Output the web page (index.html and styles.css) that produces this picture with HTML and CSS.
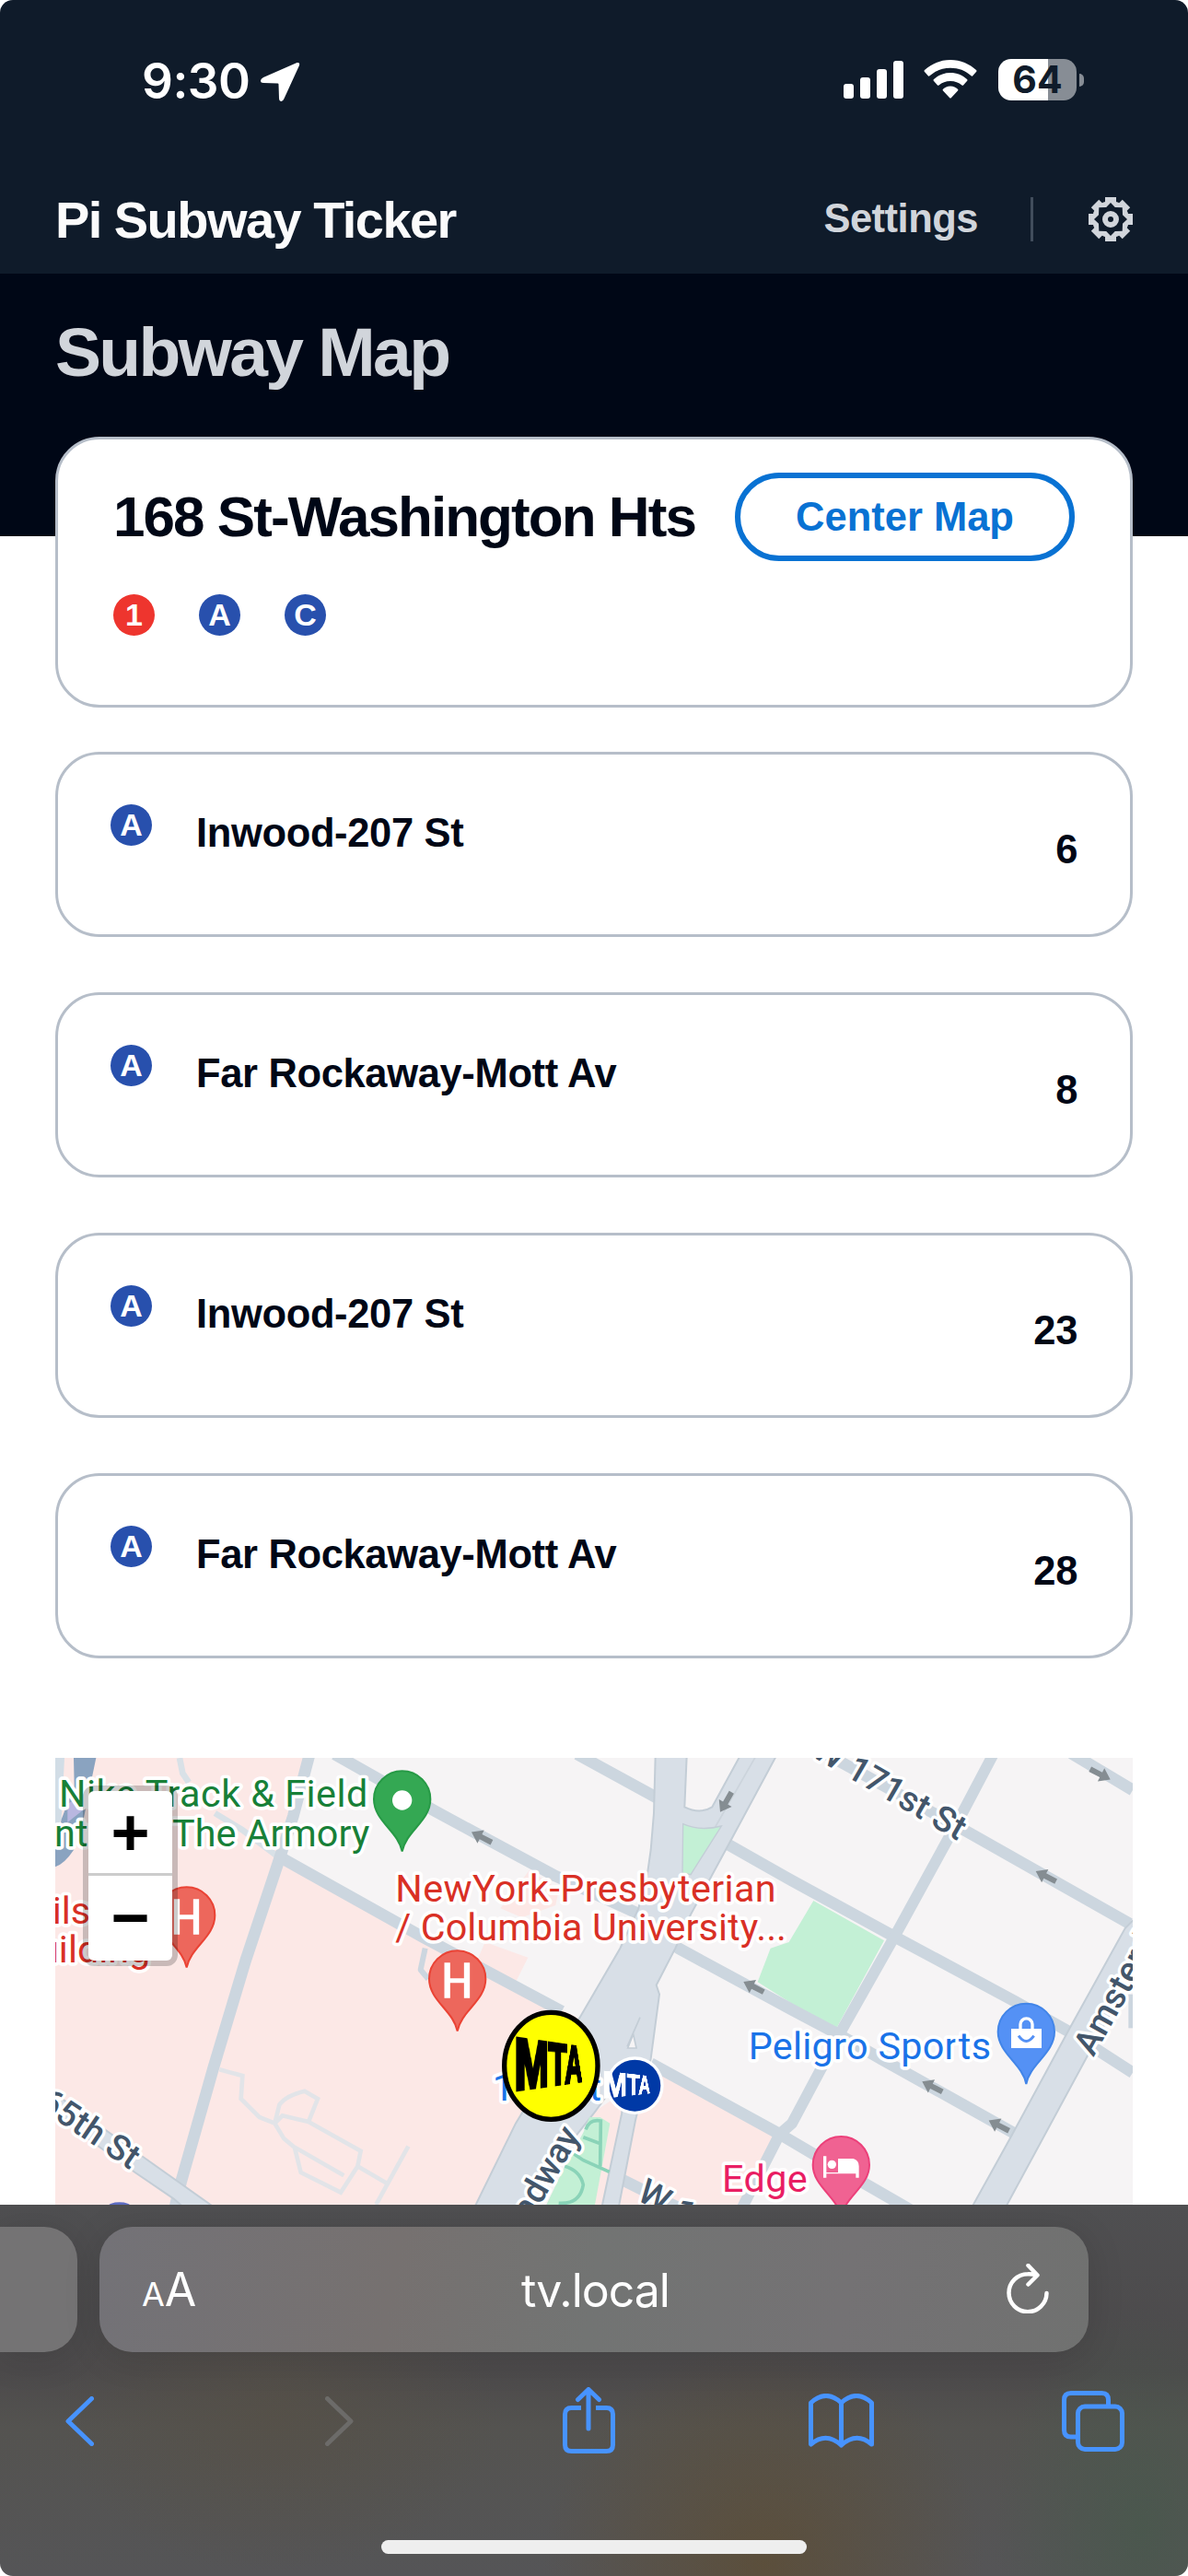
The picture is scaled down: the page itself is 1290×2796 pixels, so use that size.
FILE: index.html
```
<!DOCTYPE html>
<html lang="en">
<head>
<meta charset="utf-8">
<title>Pi Subway Ticker</title>
<link rel="stylesheet" href="styles.css">
</head>
<body>
<div class="screen">
  <header class="header">
    <div class="status">
      <div class="clock">
        <span class="time">9:30</span>
        <svg class="location" width="44" height="44" viewBox="0 0 44 44"><path d="M40.500 1 Q44 .5 43 4 L26.500 40 Q25 43.500 23 43 Q21 42.500 21 40 L20.500 24.500 Q20.500 23.500 19.500 23.500 L4 23 Q1 23 1 20.500 Q1 18.500 4 17 Z" fill="#fff"/></svg>
      </div>
      <div class="indicators">
        <svg width="65" height="41" viewBox="0 0 65 41" fill="#fff"><rect y="25" width="11" height="16" rx="3"/><rect x="18" y="18" width="11" height="23" rx="3"/><rect x="36" y="9" width="11" height="32" rx="3"/><rect x="54" width="11" height="41" rx="3"/></svg>
        <svg class="wifi" width="58" height="42" viewBox="0 0 58 42" fill="#fff"><path d="M29 0 C40 0 50 4.500 57 11 Q58 12 57 13 L53 17.500 Q52.500 18 51.500 17.300 C45 11.500 38 8.800 29 8.800 C20 8.800 13 11.500 6.500 17.300 Q5.500 18 5 17.500 L1 13 Q0 12 1 11 C8 4.500 18 0 29 0Z"/><path d="M29 14 C36 14 42 16.500 47 21 Q48 22 47 23 L43 27.500 Q42.300 28.200 41.500 27.500 C38 24.500 34 23 29 23 C24 23 20 24.500 16.500 27.500 Q15.700 28.200 15 27.500 L11 23 Q10 22 11 21 C16 16.500 22 14 29 14Z"/><path d="M29 28.500 C32.500 28.500 35 30 37 31.700 Q38 32.600 37 33.500 L30 41 Q29 42 28 41 L21 33.500 Q20 32.600 21 31.700 C23 30 25.500 28.500 29 28.500Z"/></svg>
        <div class="battery"><div class="cell">64</div><div class="nub"></div></div>
      </div>
    </div>
    <nav class="nav">
      <div class="brand">Pi Subway Ticker</div>
      <div class="links">
        <span class="settings">Settings</span>
        <span class="divider"></span>
        <svg width="48" height="48" viewBox="-24 -24 48 48">
          <g fill="#d1d5db">
            <circle r="20"/>
            <rect x="-6" y="-24" width="12" height="48"/>
            <rect x="-6" y="-24" width="12" height="48" transform="rotate(45)"/>
            <rect x="-6" y="-24" width="12" height="48" transform="rotate(90)"/>
            <rect x="-6" y="-24" width="12" height="48" transform="rotate(135)"/>
          </g>
          <path d="M0-18L4.800-13L12.700-12.700L13-4.800L18 0L13 4.800L12.700 12.700L4.800 13L0 18L-4.800 13L-12.700 12.700L-13 4.800L-18 0L-13-4.800L-12.700-12.700L-4.800-13Z" fill="#0f1b2a"/>
          <circle r="6" fill="none" stroke="#d1d5db" stroke-width="6"/>
        </svg>
      </div>
    </nav>
  </header>
  <main class="content">
    <section class="hero"><h1>Subway Map</h1></section>
    <section class="station">
      <div class="station-head"><h2>168 St-Washington Hts</h2><button class="center-btn">Center Map</button></div>
      <div class="lines"><span class="bullet red">1</span><span class="bullet">A</span><span class="bullet">C</span></div>
    </section>
    <section class="arrivals">
      <div class="arrival"><span class="bullet">A</span><span class="dest">Inwood-207 St</span><span class="mins">6</span></div>
      <div class="arrival"><span class="bullet">A</span><span class="dest">Far Rockaway-Mott Av</span><span class="mins">8</span></div>
      <div class="arrival"><span class="bullet">A</span><span class="dest">Inwood-207 St</span><span class="mins">23</span></div>
      <div class="arrival"><span class="bullet">A</span><span class="dest">Far Rockaway-Mott Av</span><span class="mins">28</span></div>
    </section>
    <section class="map">
      <svg class="tiles" width="1170" height="485" viewBox="0 0 3510 1455">
        <defs>
          <path id="pin" d="M0 0C-12-66-92-100-92-170A92 92 0 1 1 92-170C92-100 12-66 0 0Z"/>
          <path id="arrow" d="M-36 0L-2-24V-9H38V9H-2V24Z" fill="#858d92"/>
        </defs>
        <rect width="3510" height="1455" fill="#f6f4f5"/>
        <g fill="#fce8e6">
          <path d="M0 0H830L735 320L1200 590L1730 860L1370 1455H0Z"/>
          <path d="M1760 1150L1950 1020L2345 1235L2230 1455H1600Z"/>
          <path d="M1450 490L1545 365L1640 430L1630 480L1520 520ZM1400 600L1540 650L1500 730L1370 670Z"/>
        </g>
        <path d="M0 0H30L20 200L0 240Z" fill="#d2dde6"/>
        <path d="M60 0H133L110 110L90 210L60 300Q30 345 0 355V300L20 200L62 90Z" fill="#8aa3c0"/>
        <path d="M40 150L90 120V170L40 210Z" fill="#b9b7e0"/>
        <g fill="none" stroke="#e2e4e8" stroke-width="14">
          <path d="M405 0L415 50L435 80M520 180L610 235L730 325" stroke="#d9e1e7" stroke-width="20"/>
          <path d="M535 1015L610 1035L605 1110L665 1170L715 1190L730 1130Q750 1100 812 1085L855 1110L825 1185L740 1165L715 1190L745 1240L775 1265L940 1360M825 1185L995 1280L985 1330L930 1415L800 1350L780 1270M985 1330L1080 1385M1150 1265L1045 1455"/>
        </g>
        <path d="M2470 465L2700 595L2545 880L2400 800L2288 730L2330 620L2390 600Z" fill="#c3f0d5"/>
        <g fill="none" stroke="#ccd6df" stroke-width="38" stroke-linejoin="round">
          <path d="M735 325L1200 585L1650 825"/>
          <path d="M1205 620L1190 690L1215 720" stroke-width="18"/>
          <path d="M910-12L1240 175L1630 385L1950 530L2030 620L2400 820L2560 905L2690 980L3120 1220"/>
          <path d="M1700-12L1960 130M2180 275L2400 400L2730 580L3130 795L3300 890L3510 1025"/>
          <path d="M2480-30L2970 240L3500 540M3310-15L3510 105"/>
          <path d="M3060-20L2960 170L2735 580L2560 890L2400 1190L2360 1225L2235 1470" stroke-width="36"/>
          <path d="M1940 995L2360 1225L2470 1290L2800 1480M1820 1360L2100 1500"/>
          <path d="M828-10L775 190L725 345L620 660L515 1010L410 1380L388 1470"/>
          <path d="M3508 770V880" stroke-width="24"/>
        </g>
        <g fill="#d8dfe7" stroke="#c3cdd6" stroke-width="6">
          <path d="M-20 1080L290 1302L520 1465H420L385 1435L260 1350L-20 1150Z"/>
          <path d="M1955-5L1950 180L1940 300L1930 370L1900 490L1840 620L1712 840L1500 1190L1365 1465H1510L1760 1150L1870 1000L1860 1040L1845 1160L1780 1465H1835L1890 1180L1940 980L1968 770L1958 740L2020 620L2070 510L2200 270L2348-5H2230L2140 160Q2100 185 2050 160L2057-5Z"/>
          <path d="M3515 525L3485 555L3305 880L3110 1240L2985 1465H3095L3360 975L3515 690Z"/>
        </g>
        <path d="M2282-5L2150 225" stroke="#ccd4dc" stroke-width="5"/>
        <path d="M2045 215Q2100 240 2170 222L2070 380L2043 375Z" fill="#c3f0d5" stroke="#c3cdd6" stroke-width="4"/>
        <path d="M1905 845L1863 940M1883 900L1865 945H1893Z" fill="#f6f4f5" stroke="#c3cdd6" stroke-width="5"/>
        <path d="M1740 1170H1775L1807 1190L1758 1455H1600L1660 1330L1720 1220Z" fill="#c3f0d5"/>
        <path d="M1728 1210Q1740 1175 1777 1182L1775 1330M1720 1235L1780 1258M1690 1290L1720 1310L1805 1348M1660 1330Q1710 1345 1720 1390Q1710 1455 1640 1450" fill="none" stroke="#8ad3b8" stroke-width="11"/>
        <ellipse cx="209" cy="1462" rx="38" ry="15" fill="#5c6bc0"/>
        <use href="#arrow" transform="translate(1388 258) rotate(27)"/>
        <use href="#arrow" transform="translate(2274 745) rotate(27)"/>
        <use href="#arrow" transform="translate(3226 385) rotate(27)"/>
        <use href="#arrow" transform="translate(2856 1070) rotate(27)"/>
        <use href="#arrow" transform="translate(3073 1197) rotate(27)"/>
        <use href="#arrow" transform="translate(3405 54) rotate(207)"/>
        <use href="#arrow" transform="translate(2184 145) rotate(-60)"/>
        <g class="place green">
          <text x="12" y="160" textLength="1006">Nike Track &amp; Field</text>
          <text x="1024" y="287" text-anchor="end">Center at The Armory</text>
        </g>
        <g class="place crimson">
          <text x="1108" y="467" textLength="1240">NewYork-Presbyterian</text>
          <text x="1108" y="594" textLength="1274">/ Columbia University...</text>
          <text x="-118" y="540">Milstein</text>
          <text x="310" y="665" text-anchor="end">Building</text>
        </g>
        <text class="place blue" x="2258" y="980" textLength="790">Peligro Sports</text>
        <text class="place blue" x="1424" y="1115" textLength="355">168 St</text>
        <text class="place pink" x="2172" y="1412" textLength="278">Edge</text>
        <g class="street">
          <text transform="translate(2940 270) rotate(30)" text-anchor="end">W 171st St</text>
          <text transform="translate(244 1342) rotate(34)" text-anchor="end">W 165th St</text>
          <text transform="translate(1712 1228) rotate(-60)" text-anchor="end">Broadway</text>
          <text transform="translate(3382 976) rotate(-61)">Amsterdam Ave</text>
          <text transform="translate(1890 1436) rotate(29)">W 169th St</text>
        </g>
        <g stroke-width="6">
          <use href="#pin" x="1130" y="305" fill="#34a853" stroke="#279a46"/><circle cx="1130" cy="138" r="32" fill="#fff"/>
          <use href="#pin" x="428" y="683" fill="#ed675c" stroke="#ea4335"/>
          <use href="#pin" x="1310" y="890" fill="#ed675c" stroke="#ea4335"/>
          <use href="#pin" x="3163" y="1062" fill="#5491f5" stroke="#4285e8"/>
          <use href="#pin" x="2560" y="1495" fill="#f06292" stroke="#ec407a"/>
        </g>
        <path d="M396 460V575M459 460V575M1277 667V782M1341 667V782" stroke="#fff" stroke-width="19"/>
        <path d="M396 518H459M1277 725H1341" stroke="#fff" stroke-width="15"/>
        <path d="M3114 882H3213V945H3114Z" fill="#fff"/>
        <path d="M3144 885V868A19 19 0 0 1 3183 868V885" fill="none" stroke="#fff" stroke-width="10"/>
        <path d="M3138 905Q3163 940 3188 905" fill="none" stroke="#5491f5" stroke-width="9"/>
        <path d="M2502 1297H2512V1350H2550V1305H2600Q2618 1310 2618 1330V1367H2608V1354H2512V1367H2502Z" fill="#fff"/><circle cx="2530" cy="1324" r="14" fill="#fff"/>
        <circle cx="1888" cy="1067" r="94" fill="#fff"/><circle cx="1888" cy="1067" r="84" fill="#0039a6"/>
        <ellipse cx="1615" cy="1003" rx="152" ry="174" fill="#ff0" stroke="#000" stroke-width="16"/>
      </svg>
      <span class="mta mta-big">MTA</span>
      <span class="mta mta-small">MTA</span>
      <div class="zoom"><span>+</span><span>−</span></div>
    </section>
  </main>
  <footer class="toolbar">
    <div class="tabs">
      <div class="tab-prev"></div>
      <div class="address">
        <span class="aa"><small>A</small>A</span>
        <span class="url">tv.local</span>
        <svg width="46" height="54" viewBox="0 0 46 54" fill="none" stroke="#fff" stroke-width="4.500" stroke-linecap="round" stroke-linejoin="round"><path d="M43.500 32A20.500 20.500 0 1 1 23 11.200Q28 11 33 12.500M23.500 2L33.500 12.500L23.500 22.500"/></svg>
      </div>
    </div>
    <div class="actions">
      <svg width="31" height="54" viewBox="0 0 31 54"><path d="M28.500 2.500L3 27L28.500 51.500"/></svg>
      <svg class="off" width="31" height="54" viewBox="0 0 31 54"><path d="M2.500 2.500L28 27L2.500 51.500"/></svg>
      <svg class="share" width="57" height="73" viewBox="0 0 57 73"><path d="M20 22.500H9.500Q2.500 22.500 2.500 29.500V62.500Q2.500 69.500 9.500 69.500H47.500Q54.500 69.500 54.500 62.500V29.500Q54.500 22.500 47.500 22.500H36" stroke-linecap="butt"/><path d="M28 45V2.500M16.500 13.500L28 2.500L39.500 13.500"/></svg>
      <svg class="book" width="71" height="59" viewBox="0 0 71 59"><path d="M35.500 56Q19 41 2.500 55V10Q19-5 35.500 10Q52-5 68.500 10V55Q52 41 35.500 56V10"/></svg>
      <svg class="pages" width="68" height="66" viewBox="0 0 68 66"><path d="M15.500 50H10Q2.500 50 2.500 42.500V10Q2.500 2.500 10 2.500H43.500Q50.500 2.500 50.500 10V15" stroke-linecap="butt"/><rect x="17.500" y="17" width="48" height="46.500" rx="7.500"/></svg>
    </div>
    <div class="home"></div>
  </footer>
</div>
</body>
</html>
```
FILE: styles.css
```
* { box-sizing: border-box; }
body { margin: 0; background: #fff; font-family: "Liberation Sans", Arial, sans-serif; color: #000716; }
h1, h2 { margin: 0; font-weight: 700; }
svg { display: block; flex: none; }

.screen { width: 1290px; height: 2796px; display: flex; flex-direction: column; overflow: hidden; border-radius: 14px; background: #fff; }

.header { height: 297px; flex: none; background: #0f1b2a; }
.status { height: 178px; padding: 64px 113px 0 154px; display: flex; justify-content: space-between; align-items: flex-start; }
.clock { display: flex; align-items: center; gap: 11px; height: 49px; }
.time { font: 600 53px/49px Inter, sans-serif; color: #fff; letter-spacing: -.5px; }
.indicators { display: flex; align-items: flex-start; padding-top: 0; }
.indicators > svg { margin-top: 2px; }
.indicators > .wifi { margin: 1px 23px 0 22px; }
.battery { display: flex; align-items: center; gap: 3px; }
.cell { width: 85px; height: 45px; border-radius: 14px; background: linear-gradient(90deg, #fff 54px, #878d95 54px); font: 700 41px/45px Inter, sans-serif; color: #0f1b2a; text-align: center; }
.nub { width: 5px; height: 14px; border-radius: 0 5px 5px 0; background: #878d95; }

.nav { height: 119px; padding: 0 60px; display: flex; justify-content: space-between; align-items: center; }
.brand { font-size: 56px; line-height: 60px; font-weight: 700; color: #fbfbfb; padding-top: 3px; letter-spacing: -1.55px; }
.links { display: flex; align-items: center; }
.settings { font-size: 43.5px; font-weight: 700; color: #d1d5db; letter-spacing: -.5px; }
.divider { width: 3px; height: 48px; margin: 0 60px 0 57px; background: #414d5c; }

.content { flex: 1; min-height: 0; overflow: hidden; padding: 0 60px; display: flex; flex-direction: column; }
.hero { flex: none; height: 285px; margin: 0 -60px; padding: 45px 60px 0; background: #000716; color: #d1d5db; }
.hero h1 { font-size: 75px; line-height: 80px; letter-spacing: -2.7px; }

.station { flex: none; height: 294px; margin-top: -108px; padding: 36px 60px; border: 3px solid #b6bec9; border-radius: 48px; background: #fff; }
.station-head { height: 96px; display: flex; justify-content: space-between; align-items: center; }
.station h2 { font-size: 62px; line-height: 96px; white-space: nowrap; letter-spacing: -1.95px; }
.center-btn { width: 369px; height: 96px; padding: 0; border: 6px solid #0972d3; border-radius: 48px; background: #fff; color: #0972d3; font: 700 43.5px/84px "Liberation Sans", Arial, sans-serif; }
.lines { display: flex; gap: 48px; margin-top: 36px; }
.bullet { width: 45px; height: 45px; flex: none; border-radius: 50%; background: #2850ad; color: #fff; font-size: 34px; line-height: 45px; font-weight: 700; text-align: center; }
.bullet.red { background: #ee352e; }

.arrivals { flex: none; margin-top: 48px; display: flex; flex-direction: column; gap: 60px; }
.arrival { height: 201px; padding: 54px 57px; border: 3px solid #b6bec9; border-radius: 48px; display: flex; align-items: flex-start; font-size: 43.5px; line-height: 48px; font-weight: 700; }
.dest { flex: 1; margin: 7px 0 0 48px; letter-spacing: -.35px; }
.mins { margin-top: 25px; letter-spacing: -.35px; }

.map { flex: none; position: relative; height: 485px; margin-top: 108px; overflow: hidden; background: #f6f4f5; }
.place { font-family: Roboto, sans-serif; font-size: 124px; stroke: #fff; stroke-width: 22px; stroke-linejoin: round; paint-order: stroke; }
.green { fill: #188038; }
.crimson { fill: #d93025; }
.blue { fill: #1a73e8; }
.pink { fill: #e91e63; }
.street text { font-family: Roboto, sans-serif; font-size: 114px; font-weight: 500; fill: #43566b; stroke: #fff; stroke-width: 20px; stroke-linejoin: round; paint-order: stroke; }

.mta { position: absolute; font-weight: 700; font-size: 70px; line-height: 70px; width: 152px; text-align: center; }
.mta-big { left: 467px; top: 298px; color: #000; -webkit-text-stroke: 4px #000; transform: scale(1.08, .9) perspective(154px) rotateY(45deg) scaleX(.63); }
.mta-small { left: 550px; top: 320px; color: #fff; -webkit-text-stroke: 2px #fff; transform: scale(.68, .46) perspective(154px) rotateY(45deg) scaleX(.7); }

.zoom { position: absolute; left: 30px; top: 30px; width: 103px; border: 6px solid rgba(0, 0, 0, .2); border-radius: 12px; background: #fff; background-clip: padding-box; }
.zoom span { display: block; height: 92px; font-size: 72px; line-height: 90px; font-weight: 700; color: #000; text-align: center; }
.zoom span:first-child { border-bottom: 3px solid #ccc; }

.toolbar { height: 403px; flex: none; background: radial-gradient(ellipse 240px 240px at 830px 390px, rgba(94, 76, 48, .7), transparent), radial-gradient(ellipse 160px 240px at 1240px 350px, rgba(72, 88, 76, .8), transparent), radial-gradient(ellipse 240px 170px at 300px 230px, rgba(86, 80, 70, .7), transparent), linear-gradient(#4f4f51, #4c4a4b 45%, #545350 60%, #555557); }
.tabs { display: flex; gap: 24px; padding-top: 24px; }
.tab-prev { width: 84px; height: 136px; border-radius: 0 36px 36px 0; background: #747374; box-shadow: 0 6px 40px rgba(0, 0, 0, .12); }
.address { width: 1074px; height: 136px; padding: 0 43px 0 46px; border-radius: 36px; background: linear-gradient(100deg, #737277, #767170 30%, #727473 50%, #747274 75%, #707170); box-shadow: 0 6px 40px rgba(0, 0, 0, .12); display: grid; grid-template-columns: 1fr auto 1fr; align-items: center; color: #fff; font: 400 50px/60px Inter, sans-serif; }
.address svg { justify-self: end; margin-bottom: 3px; }
.aa { font-size: 50px; letter-spacing: -1px; padding-top: 4px; }
.aa small { font-size: 36px; letter-spacing: 0; }
.url { padding-top: 2px; letter-spacing: -1px; }
.actions { height: 73px; margin-top: 38px; padding: 0 68px 0 71px; display: flex; align-items: center; }
.actions svg { fill: none; stroke: #4793ff; stroke-width: 5; stroke-linecap: round; stroke-linejoin: round; }
.actions .off { stroke: #6c6b69; margin-left: 251px; }
.actions .share { margin-left: 227px; }
.actions .book { margin-left: 210px; }
.actions .pages { margin-left: 204px; }
.home { width: 462px; height: 15px; margin: 93px auto 0; border-radius: 8px; background: #eee; }
```
